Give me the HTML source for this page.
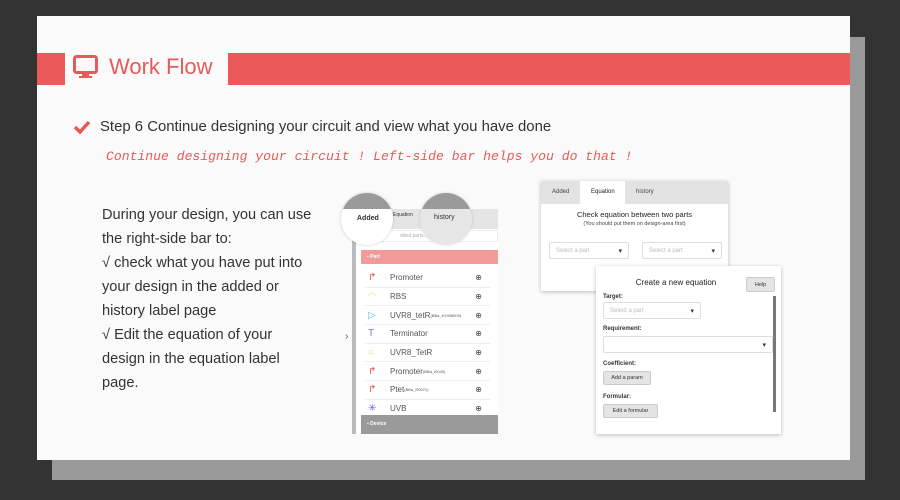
<!DOCTYPE html>
<html><head><meta charset="utf-8">
<style>
*{box-sizing:border-box;margin:0;padding:0}
body{width:900px;height:500px;background:#333;position:relative;overflow:hidden;font-family:"Liberation Sans",sans-serif}
.abs{position:absolute}
.shadow{left:52px;top:37px;width:813px;height:443px;background:#999}
.card{left:37px;top:16px;width:813px;height:444px;background:#fafafa}
.bar{background:#eb5a5a;top:53px;height:32px}
.title{left:73px;top:54px;font-size:22px;color:#e85a5a;display:flex;align-items:center;gap:11px}
.step{left:73px;top:119px;font-size:14.9px;color:#333;display:flex;align-items:center;gap:9px}
.sub{left:106px;top:149px;font-family:"Liberation Mono",monospace;font-style:italic;font-size:13.1px;color:#e85a5a}
.desc{left:102px;top:203px;font-size:14.6px;color:#333;line-height:24px}
.sh{box-shadow:0 1px 4px rgba(0,0,0,.25);background:#fff}
.row{height:18.7px;display:flex;align-items:center;font-size:8px;color:#555;border-bottom:1px solid #eee;margin:0 8px 0 4px;position:relative}
.row .ic{width:16px;margin-left:3px;margin-right:6px;color:#e55;font-size:10px}
.row .mg{position:absolute;right:8px;font-size:8px;color:#444}
.sel{border:1px solid #ddd;border-radius:2px;height:17px;font-size:6px;color:#bbb;display:flex;align-items:center;padding-left:6px;position:absolute;background:#fff}
.sel:after{content:"▾";position:absolute;right:6px;color:#333;font-size:7px}
.lbl{font-size:6px;font-weight:bold;color:#333;position:absolute}
.btn{background:#e4e4e4;border:1px solid #ccc;border-radius:2px;font-size:5.5px;color:#333;position:absolute;display:flex;align-items:center;justify-content:center}
</style></head><body>
<div class="abs shadow"></div>
<div class="abs card"></div>
<div class="abs bar" style="left:37px;width:28px"></div>
<div class="abs bar" style="left:228px;width:622px"></div>
<div class="abs title">
<svg width="25" height="24" viewBox="0 0 25 24"><rect x="1.5" y="1.5" width="22" height="16" rx="2" fill="none" stroke="#e85a5a" stroke-width="3"/><rect x="9" y="18" width="7" height="3" fill="#e85a5a"/><rect x="6" y="21" width="13" height="2" fill="#e85a5a"/></svg>
<span>Work Flow</span></div>
<div class="abs step"><svg width="18" height="14" viewBox="0 0 18 14"><path d="M2 7 L7 12 L16 2" fill="none" stroke="#e85a5a" stroke-width="3.5"/></svg><span>Step 6 Continue designing your circuit and view what you have done</span></div>
<div class="abs sub">Continue designing your circuit ! Left-side bar helps you do that !</div>
<div class="abs desc">During your design, you can use<br>the right-side bar to:<br>√ check what you have put into<br>your design in the added or<br>history label page<br>√ Edit the equation of your<br>design in the equation label<br>page.</div>

<div class="abs" style="left:352px;top:209px;width:146px;height:225px;background:#fff;overflow:hidden">
 <div class="abs" style="left:0;top:0;width:146px;height:20px;background:#e5e5e5"></div>
 <div class="abs" style="left:0;top:20px;width:4px;height:205px;background:#bbb"></div>
 <div class="abs" style="left:7px;top:21px;width:139px;height:12px;border:1px solid #eee;font-size:5px;color:#aaa;padding:2px 0 0 40px">dded parts...</div>
 <div class="abs" style="left:9px;top:41px;width:137px;height:14px;background:#f09a9a;font-size:5px;color:#fff;padding:4px 0 0 6px;font-weight:bold">▪ Part</div>
 <div class="abs" style="left:9px;top:60px;width:137px">
  <div class="row"><span class="ic">↱</span>Promoter<span class="mg">⊕</span></div>
  <div class="row"><span class="ic" style="color:#ee6">◠</span>RBS<span class="mg">⊕</span></div>
  <div class="row"><span class="ic" style="color:#4cd">▷</span>UVR8_tetR<span style="font-size:4px">(BBa_K1908000)</span><span class="mg">⊕</span></div>
  <div class="row"><span class="ic" style="color:#87c">T</span>Terminator<span class="mg">⊕</span></div>
  <div class="row"><span class="ic" style="color:#ec6">○</span>UVR8_TetR<span class="mg">⊕</span></div>
  <div class="row"><span class="ic">↱</span>Promoter<span style="font-size:4px">(BBa_I0040)</span><span class="mg">⊕</span></div>
  <div class="row"><span class="ic">↱</span>Ptet<span style="font-size:4px">(BBa_R0071)</span><span class="mg">⊕</span></div>
  <div class="row"><span class="ic" style="color:#66e">✳</span>UVB<span class="mg">⊕</span></div>
 </div>
 <div class="abs" style="left:9px;top:206px;width:137px;height:19px;background:#9a9a9a;font-size:5px;color:#fff;padding:6px 0 0 6px;font-weight:bold">▪ Device</div>
</div>
<div class="abs" style="left:345px;top:331px;font-size:10px;color:#555">›</div>
<div class="abs" style="left:341px;top:193px;width:52px;height:52px;border-radius:50%;background:#fff;box-shadow:0 0 3px rgba(0,0,0,.2);overflow:hidden"><div class="abs" style="left:0;top:0;width:52px;height:16px;background:#9a9a9a"></div><div class="abs" style="left:16px;top:22px;font-size:7px;font-weight:bold;color:#333">Added</div></div>
<div class="abs" style="left:393px;top:212px;font-size:5px;color:#333">Equation</div>
<div class="abs" style="left:420px;top:193px;width:52px;height:52px;border-radius:50%;background:#e6e6e6;box-shadow:0 0 3px rgba(0,0,0,.15);overflow:hidden"><div class="abs" style="left:0;top:0;width:52px;height:16px;background:#9a9a9a"></div><div class="abs" style="left:14px;top:21px;font-size:7px;color:#333">history</div></div>

<div class="abs sh" style="left:541px;top:181px;width:187px;height:110px">
 <div class="abs" style="left:0;top:0;width:187px;height:23px;background:#e3e3e3"></div>
 <div class="abs" style="left:39px;top:0;width:45px;height:23px;background:#fff"></div>
 <div class="abs" style="left:11px;top:8px;font-size:6px;color:#444">Added</div>
 <div class="abs" style="left:50px;top:8px;font-size:6px;color:#222">Equation</div>
 <div class="abs" style="left:95px;top:8px;font-size:6px;color:#444">history</div>
 <div class="abs" style="left:0;top:29px;width:187px;text-align:center;font-size:7.5px;color:#222">Check equation between two parts</div>
 <div class="abs" style="left:0;top:40px;width:187px;text-align:center;font-size:5.5px;color:#444">(You should put them on design-area first)</div>
 <div class="sel" style="left:8px;top:61px;width:80px;height:17px">Select a part</div>
 <div class="sel" style="left:101px;top:61px;width:80px;height:17px">Select a part</div>
</div>
<div class="abs sh" style="left:596px;top:266px;width:185px;height:168px">
 <div class="abs" style="left:0;top:12px;width:160px;text-align:center;font-size:8px;color:#222">Create a new equation</div>
 <div class="btn" style="left:150px;top:11px;width:29px;height:15px">Help</div>
 <div class="abs" style="left:177px;top:30px;width:3px;height:116px;background:#777"></div>
 <div class="lbl" style="left:7px;top:28px">Target:</div>
 <div class="sel" style="left:7px;top:36px;width:98px;height:17px">Select a part</div>
 <div class="lbl" style="left:7px;top:60px">Requirement:</div>
 <div class="sel" style="left:7px;top:70px;width:170px;height:17px"></div>
 <div class="lbl" style="left:7px;top:95px">Coefficient:</div>
 <div class="btn" style="left:7px;top:105px;width:48px;height:14px">Add a param</div>
 <div class="lbl" style="left:7px;top:128px">Formular:</div>
 <div class="btn" style="left:7px;top:138px;width:55px;height:14px">Edit a formular</div>
</div>
</body></html>
